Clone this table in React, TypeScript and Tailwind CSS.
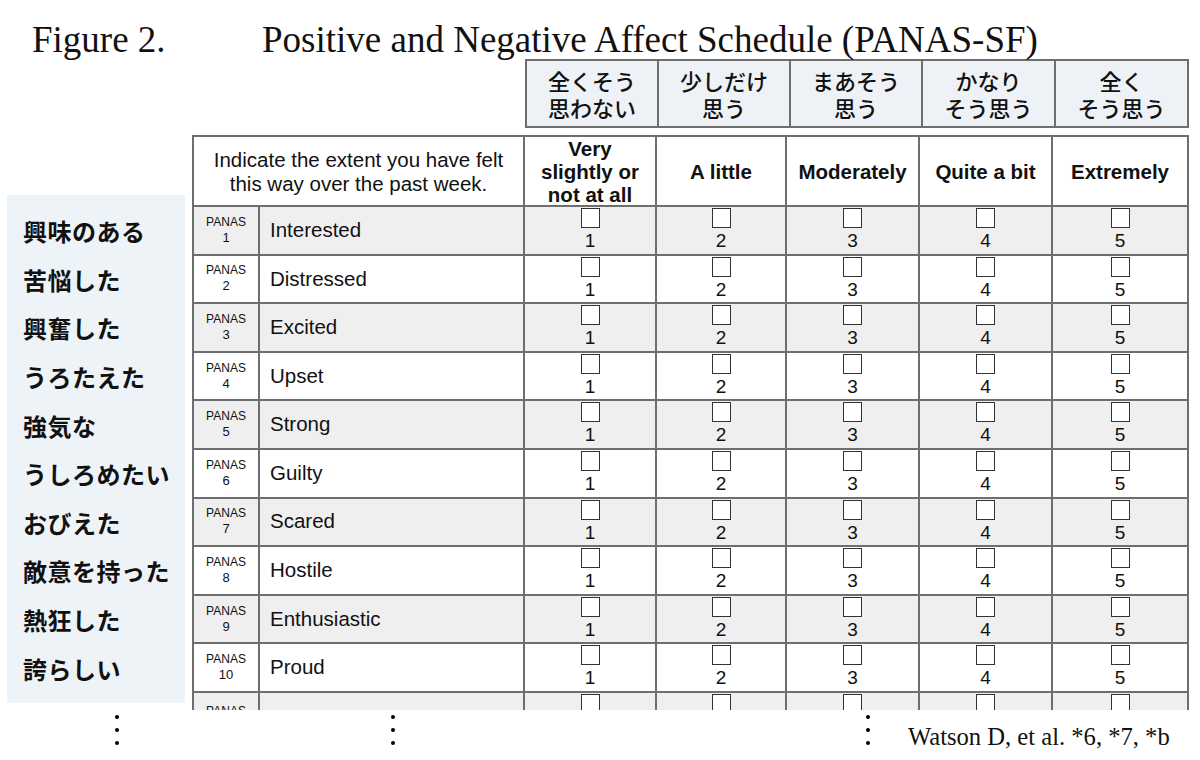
const jpHeads = [
  ["全くそう", "思わない"],
  ["少しだけ", "思う"],
  ["まあそう", "思う"],
  ["かなり", "そう思う"],
  ["全く", "そう思う"],
];

const enHeads = [["Very", "slightly or", "not at all"], ["A little"], ["Moderately"], ["Quite a bit"], ["Extremely"]];

const items = [
  { jp: "興味のある", en: "Interested" },
  { jp: "苦悩した", en: "Distressed" },
  { jp: "興奮した", en: "Excited" },
  { jp: "うろたえた", en: "Upset" },
  { jp: "強気な", en: "Strong" },
  { jp: "うしろめたい", en: "Guilty" },
  { jp: "おびえた", en: "Scared" },
  { jp: "敵意を持った", en: "Hostile" },
  { jp: "熱狂した", en: "Enthusiastic" },
  { jp: "誇らしい", en: "Proud" },
  { jp: "", en: "" },
];

const serif = "font-['Liberation_Serif','Times_New_Roman',serif]";
const sans = "font-['Liberation_Sans',Arial,sans-serif]";
const jpFont = "font-['Noto_Sans_CJK_JP','Noto_Sans_CJK_SC',sans-serif]";
const cell = "border-r-2 border-b-2 border-[#6e6e6e]";

function Dots() {
  return (
    <div className="flex flex-col gap-[9px]">
      <span className="w-[4px] h-[4px] rounded-full bg-black" />
      <span className="w-[4px] h-[4px] rounded-full bg-black" />
      <span className="w-[4px] h-[4px] rounded-full bg-black" />
    </div>
  );
}

export default function App() {
  return (
    <div className="w-[1200px] h-[760px] bg-white overflow-hidden text-[#111]">
      {/* title */}
      <div className={`flex h-[59px] pt-[20px] text-[37px] leading-[40px] ${serif}`}>
        <span className="ml-[32px] w-[230px]">Figure 2.</span>
        <span>Positive and Negative Affect Schedule (PANAS-SF)</span>
      </div>

      {/* japanese scale labels */}
      <div className={`ml-[525px] w-[664px] grid grid-cols-[132px_132px_132px_133px_133px] border-l-2 border-t-2 border-[#6e6e6e] ${jpFont}`}>
        {jpHeads.map((h, i) => (
          <div key={i} className={`${cell} h-[67px] bg-[#eef2f7] flex flex-col items-center justify-center text-[22px] leading-[27px] font-medium`}>
            <span>{h[0]}</span>
            <span>{h[1]}</span>
          </div>
        ))}
      </div>

      <div className="flex mt-[7px]">
        {/* left japanese item panel */}
        <div className={`ml-[7px] mt-[60px] w-[178px] h-[508px] bg-[#eef3f8] pt-[12px] pl-[16px] ${jpFont}`}>
          {items.slice(0, 10).map((it) => (
            <div key={it.jp} className="h-[48.6px] flex items-center text-[24px] font-bold tracking-[0.5px]">
              {it.jp}
            </div>
          ))}
        </div>

        {/* main table, last row cut off */}
        <div className="ml-[7px] h-[575px] overflow-hidden">
          <div className={`w-[997px] grid grid-cols-[66px_265px_132px_130px_133px_133px_136px] border-l-2 border-t-2 border-[#6e6e6e] ${sans}`}>
            <div className={`${cell} col-span-2 h-[70px] flex flex-col items-center justify-center text-[20.5px] leading-[24px] pt-[2px]`}>
              <span>Indicate the extent you have felt</span>
              <span>this way over the past week.</span>
            </div>
            {enHeads.map((h, i) => (
              <div key={i} className={`${cell} h-[70px] flex flex-col items-center justify-center text-[20.5px] leading-[23px] font-bold`}>
                {h.map((l) => (
                  <span key={l}>{l}</span>
                ))}
              </div>
            ))}

            {items.map((it, r) => {
              const bg = r % 2 === 0 ? "bg-[#efefef]" : "bg-white";
              const last = r === items.length - 1;
              return [
                <div key={`p${r}`} className={`${cell} ${bg} h-[48.6px] flex flex-col items-center ${last ? "pt-[12px]" : "justify-center"} text-[12px] leading-[13px] pb-[1px]`}>
                  <span>PANAS</span>
                  {!last && <span className="pt-[2px] text-[13px]">{r + 1}</span>}
                </div>,
                <div key={`w${r}`} className={`${cell} ${bg} h-[48.6px] flex items-center pl-[10px] text-[20.5px]`}>
                  {it.en}
                </div>,
                ...[1, 2, 3, 4, 5].map((n) => (
                  <div key={`c${r}-${n}`} className={`${cell} ${bg} h-[48.6px] flex flex-col items-center pt-[1px]`}>
                    <span className="w-[19px] h-[20px] border-[1.5px] border-[#333] bg-white" />
                    {!last && <span className="text-[19px] leading-[23px] pt-[1px]">{n}</span>}
                  </div>
                )),
              ];
            })}
          </div>
        </div>
      </div>

      {/* footer */}
      <div className="flex items-end mt-[5px]">
        <div className="ml-[115px]"><Dots /></div>
        <div className="ml-[272px]"><Dots /></div>
        <div className="ml-[471px]"><Dots /></div>
        <span className={`ml-[38px] text-[24.6px] leading-[28px] mb-[-6px] ${serif}`}>Watson D, et al. *6, *7, *b</span>
      </div>
    </div>
  );
}
